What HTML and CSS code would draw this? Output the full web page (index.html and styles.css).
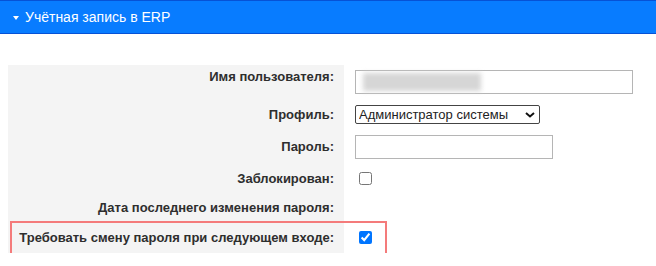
FILE: index.html
```html
<!DOCTYPE html>
<html>
<head>
    <title>Учётная запись в ERP</title>
    <meta charset="utf-8">
    <link rel="stylesheet" href="styles.css">
</head>
<body>

    <div class="panel-head">
        <span class="caret"></span>
        <span class="panel-title">Учётная запись в ERP</span>
    </div>

    <div class="form">
        <div class="row row-user">
            <div class="label">Имя пользователя:</div>
            <div class="value">
                <div class="masked">
                    <input type="text" class="text-input wide">
                    <span class="blur"></span>
                </div>
            </div>
        </div>
        <div class="row row-short">
            <div class="label">Профиль:</div>
            <div class="value">
                <select class="profile">
                    <option>Администратор системы</option>
                </select>
            </div>
        </div>
        <div class="row row-tall">
            <div class="label">Пароль:</div>
            <div class="value">
                <input type="password" class="text-input narrow">
            </div>
        </div>
        <div class="row row-short">
            <div class="label">Заблокирован:</div>
            <div class="value">
                <input type="checkbox">
            </div>
        </div>
        <div class="row row-short">
            <div class="label">Дата последнего изменения пароля:</div>
            <div class="value"></div>
        </div>
        <div class="row row-last flagged">
            <div class="label">Требовать смену пароля при следующем входе:</div>
            <div class="value">
                <input type="checkbox" checked>
            </div>
        </div>
    </div>

</body>
</html>
```

FILE: styles.css
```css
* {
    box-sizing: border-box;
}

body {
    margin: 0;
    font-family: "Liberation Sans", Arial, sans-serif;
    font-size: 13px;
    color: #2e2e2e;
    background: #fff;
}

.panel-head {
    height: 34px;
    background: #087cff;
    border-top: 1px solid #0652d6;
    border-bottom: 1px solid #0652d6;
    display: flex;
    align-items: center;
    padding-left: 13px;
    color: #fff;
    margin-bottom: 31px;
}

.caret {
    width: 0;
    height: 0;
    border-left: 3px solid transparent;
    border-right: 3px solid transparent;
    border-top: 4px solid #fff;
    margin-right: 6px;
    margin-top: 1px;
}

.panel-title {
    font-size: 14px;
}

.form {
    padding: 0 8px;
}

.row {
    display: grid;
    grid-template-columns: 336px 1fr;
    align-items: center;
}

.row-user { height: 35px; }
.row-short { height: 29px; }
.row-tall { height: 35px; }
.row-last { height: 31px; }

.label {
    background: #f4f4f4;
    height: 100%;
    display: flex;
    align-items: center;
    justify-content: flex-end;
    padding-right: 10px;
    font-weight: bold;
    line-height: 16px;
}

.row-user .label {
    align-items: flex-start;
    padding-top: 4px;
}

.value {
    padding-left: 11px;
    display: flex;
    align-items: center;
}

.row-user .value {
    align-self: start;
    padding-top: 5px;
}

.text-input {
    height: 24px;
    border: 1px solid #b5b5b5;
    border-radius: 0;
    padding: 2px 4px;
    font-family: inherit;
    font-size: 13px;
    background: #fff;
}

.wide { width: 278px; }
.narrow { width: 198px; }

.masked {
    position: relative;
}

.blur {
    position: absolute;
    left: 8px;
    top: 3px;
    width: 118px;
    height: 18px;
    background: #d6d6d6;
    filter: blur(2.5px);
}

.profile {
    appearance: none;
    -webkit-appearance: none;
    width: 185px;
    height: 19px;
    border: 1px solid #444;
    border-radius: 2px;
    padding: 0 0 0 3px;
    font-family: "Liberation Sans", Arial, sans-serif;
    font-size: 13px;
    color: #222;
    background: #fff url("data:image/svg+xml,%3Csvg xmlns='http://www.w3.org/2000/svg' width='10' height='6' viewBox='0 0 10 6'%3E%3Cpath d='M1 1l4 3.5L9 1' fill='none' stroke='%23111' stroke-width='2'/%3E%3C/svg%3E") no-repeat right 4px center;
}

input[type="checkbox"] {
    margin: 0 0 0 4px;
    width: 13px;
    height: 13px;
}

.flagged {
    position: relative;
}

.flagged::after {
    content: "";
    position: absolute;
    left: 2px;
    top: -1px;
    width: 373px;
    height: 30px;
    border: 2px solid #f47b7b;
    pointer-events: none;
}
```
